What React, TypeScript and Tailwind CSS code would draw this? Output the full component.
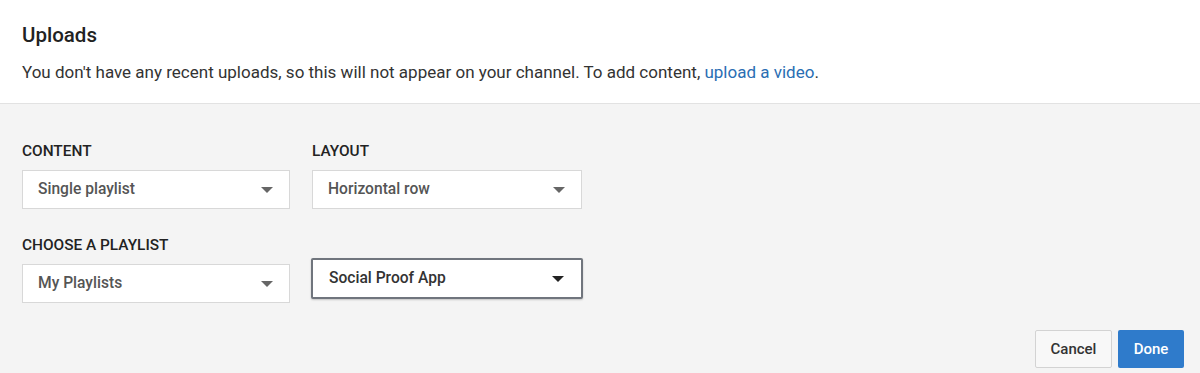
import React from 'react'

const font = { fontFamily: 'Roboto, "Noto Sans", Arial, sans-serif' }

function Caret({ dark }: { dark?: boolean }) {
  return (
    <svg width="12" height="6" viewBox="0 0 12 6" className={dark ? 'text-[#222]' : 'text-[#666]'}>
      <path d="M0 0h12L6 6z" fill="currentColor" />
    </svg>
  )
}

function Select({ value, width }: { value: string; width: string }) {
  return (
    <div
      className={`${width} h-[39px] flex items-center justify-between pl-[15px] pr-[16px] bg-white border border-[#d8d8d8] text-[15.6px] font-medium text-[#555]`}
    >
      <span>{value}</span>
      <Caret />
    </div>
  )
}

function Label({ children }: { children: React.ReactNode }) {
  return <div className="h-[20px] flex items-center text-[15.4px] font-medium text-[#222] uppercase">{children}</div>
}

export default function App() {
  return (
    <div className="w-[1200px] h-[373px] flex flex-col bg-[#f4f4f4]" style={font}>
      <div className="h-[104px] bg-white border-b border-[#e2e2e2] px-[22px] pt-[23px]">
        <h2 className="text-[20.5px] leading-[24px] font-medium text-[#222]">Uploads</h2>
        <p className="mt-[13px] text-[17px] leading-[24px] text-[#333]">
          You don't have any recent uploads, so this will not appear on your channel. To add content,{' '}
          <a className="text-[#2a6eb3]">upload a video</a>.
        </p>
      </div>

      <div className="flex-1 flex flex-col px-[22px] pt-[38px]">
        <div className="flex gap-[22px]">
          <div className="flex flex-col gap-[8px]">
            <Label>Content</Label>
            <Select value="Single playlist" width="w-[268px]" />
          </div>
          <div className="flex flex-col gap-[8px]">
            <Label>Layout</Label>
            <Select value="Horizontal row" width="w-[270px]" />
          </div>
        </div>

        <div className="flex gap-[21px] mt-[27px]">
          <div className="flex flex-col gap-[8px]">
            <Label>Choose a playlist</Label>
            <Select value="My Playlists" width="w-[268px]" />
          </div>
          <div className="pt-[22px]">
            <div className="w-[272px] h-[41px] flex items-center justify-between pl-[16px] pr-[17px] bg-white border-2 border-[#70757d] rounded-[2px] shadow-[0_1px_2px_rgba(0,0,0,0.2)] text-[15.6px] text-[#222]">
              <span className="font-medium text-[#333]">Social Proof App</span>
              <Caret dark />
            </div>
          </div>
        </div>

        <div className="flex justify-end gap-[6px] mt-[27px] -mr-[6px]">
          <button className="w-[77px] h-[38px] rounded-[2px] border border-[#d3d3d3] bg-[#f8f8f8] text-[15px] font-medium text-[#333]">
            Cancel
          </button>
          <button className="w-[66px] h-[38px] rounded-[2px] bg-[#2f7bcb] text-[15px] font-medium text-white">
            Done
          </button>
        </div>
      </div>
    </div>
  )
}
